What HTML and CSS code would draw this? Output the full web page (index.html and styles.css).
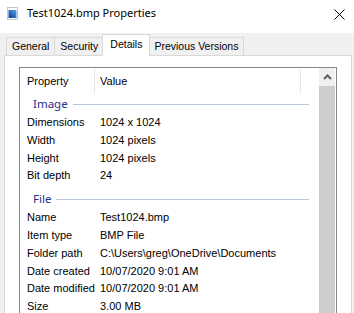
FILE: index.html
```html
<!DOCTYPE html>
<html lang="en">
<head>
    <meta charset="UTF-8">
    <title>Test1024.bmp Properties</title>
    <link rel="stylesheet" href="styles.css">
</head>
<body>
    <div class="window">
        <div class="titlebar">
            <svg class="file-icon" width="12" height="13" viewBox="0 0 12 13">
                <defs>
                    <linearGradient id="pic" x1="0" y1="1" x2="1" y2="0">
                        <stop offset="0" stop-color="#0d3f8f"/>
                        <stop offset="1" stop-color="#4ea6ea"/>
                    </linearGradient>
                </defs>
                <rect x="0.5" y="0.5" width="10" height="12" fill="#fff" stroke="#c4c4c4"/>
                <rect x="1.5" y="3" width="8" height="8" fill="url(#pic)"/>
            </svg>
            <span class="title">Test1024.bmp Properties</span>
            <svg class="close" width="11" height="11" viewBox="0 0 11 11">
                <path d="M0.5 0.5 L10.5 10.5 M10.5 0.5 L0.5 10.5" stroke="#000" stroke-width="1" fill="none"/>
            </svg>
        </div>

        <div class="tabs">
            <div class="tab">General</div>
            <div class="tab">Security</div>
            <div class="tab active">Details</div>
            <div class="tab">Previous Versions</div>
        </div>

        <div class="panel">
            <div class="listview">
                <div class="rows">
                    <div class="header">
                        <div class="hcol hname">Property</div>
                        <div class="hcol hvalue">Value</div>
                        <div class="hcol hrest"></div>
                    </div>

                    <div class="group first"><span>Image</span></div>
                    <div class="row"><span class="name">Dimensions</span><span class="value">1024 x 1024</span></div>
                    <div class="row"><span class="name">Width</span><span class="value">1024 pixels</span></div>
                    <div class="row"><span class="name">Height</span><span class="value">1024 pixels</span></div>
                    <div class="row"><span class="name">Bit depth</span><span class="value">24</span></div>

                    <div class="group"><span>File</span></div>
                    <div class="row"><span class="name">Name</span><span class="value">Test1024.bmp</span></div>
                    <div class="row"><span class="name">Item type</span><span class="value">BMP File</span></div>
                    <div class="row"><span class="name">Folder path</span><span class="value">C:\Users\greg\OneDrive\Documents</span></div>
                    <div class="row"><span class="name">Date created</span><span class="value">10/07/2020 9:01 AM</span></div>
                    <div class="row"><span class="name">Date modified</span><span class="value">10/07/2020 9:01 AM</span></div>
                    <div class="row"><span class="name">Size</span><span class="value">3.00 MB</span></div>
                </div>
                <div class="scrollbar">
                    <div class="arrow-up">
                        <svg width="9" height="6" viewBox="0 0 9 6">
                            <path d="M1 5 L4.5 1.5 L8 5" stroke="#606060" stroke-width="2" fill="none"/>
                        </svg>
                    </div>
                    <div class="thumb"></div>
                </div>
            </div>
        </div>
    </div>
</body>
</html>
```

FILE: styles.css
```css
body {
    margin: 0;
    background-color: #f0f0f0;
    font-family: "Liberation Sans", Arial, sans-serif;
    font-size: 11px;
    color: #000;
    overflow: hidden;
}
.window {
    width: 354px;
    height: 313px;
    overflow: hidden;
}

/* title bar */
.titlebar {
    height: 33px;
    background: #fff;
    display: flex;
    align-items: center;
    padding: 0 9px 0 7px;
    box-sizing: border-box;
}
.file-icon {
    margin-top: -6px;
}
.title {
    font-family: "Noto Sans", sans-serif;
    font-size: 11px;
    margin-left: 8px;
    margin-top: -8px;
    flex: 1;
}
.close {
    margin-top: -5px;
}

/* tabs */
.tabs {
    display: flex;
    align-items: flex-end;
    height: 22px;
    padding-left: 6px;
}
.tab {
    height: 18px;
    line-height: 17px;
    padding: 0 5px;
    font-size: 10.5px;
    border: 1px solid #d9d9d9;
    border-bottom: none;
    margin-left: -1px;
    box-sizing: border-box;
    background: #f0f0f0;
}
.tab:first-child {
    margin-left: 0;
}
.tab.active {
    height: 22px;
    line-height: 19px;
    background: #fff;
    margin: 0 -2px -1px -2px;
    padding: 0 7px;
    position: relative;
    z-index: 1;
}
.tab.active + .tab {
    padding-left: 6px;
}

/* panel */
.panel {
    background: #fff;
    border: 1px solid #d9d9d9;
    margin: 0 2px 0 4px;
    padding: 11px 14px 0 14px;
    height: 300px;
}
.listview {
    border: 1px solid #828790;
    display: flex;
    height: 290px;
}
.rows {
    flex: 1;
    overflow: hidden;
}

.header {
    display: flex;
    height: 25px;
    align-items: center;
}
.hcol {
    height: 24px;
    line-height: 24px;
    border-right: 1px solid #e5e5e5;
    box-sizing: border-box;
}
.hname {
    width: 75px;
    padding-left: 7px;
}
.hvalue {
    width: 206px;
    padding-left: 5px;
}
.hrest {
    border-right: none;
    flex: 1;
}

.group {
    height: 21px;
    display: flex;
    align-items: center;
    padding: 0 10px 0 13px;
    margin-top: 3px;
}
.group.first {
    margin-top: 0;
}
.group span {
    font-family: "Noto Sans", sans-serif;
    font-size: 11.5px;
    color: #1e3287;
    margin-right: 5px;
}
.group::after {
    content: "";
    flex: 1;
    border-top: 1px solid #b9c7e2;
    margin-top: 1px;
}

.row {
    display: flex;
    height: 17.8px;
    line-height: 17.8px;
    white-space: nowrap;
}
.name {
    width: 80px;
    padding-left: 7px;
    box-sizing: border-box;
}

/* scroll bar */
.scrollbar {
    width: 17px;
    display: flex;
    flex-direction: column;
}
.arrow-up {
    height: 18px;
    background: #f0f0f0;
    display: flex;
    align-items: center;
    justify-content: center;
    margin-right: 1px;
}
.thumb {
    flex: 1;
    background: #cdcdcd;
    margin-right: 1px;
}
```
